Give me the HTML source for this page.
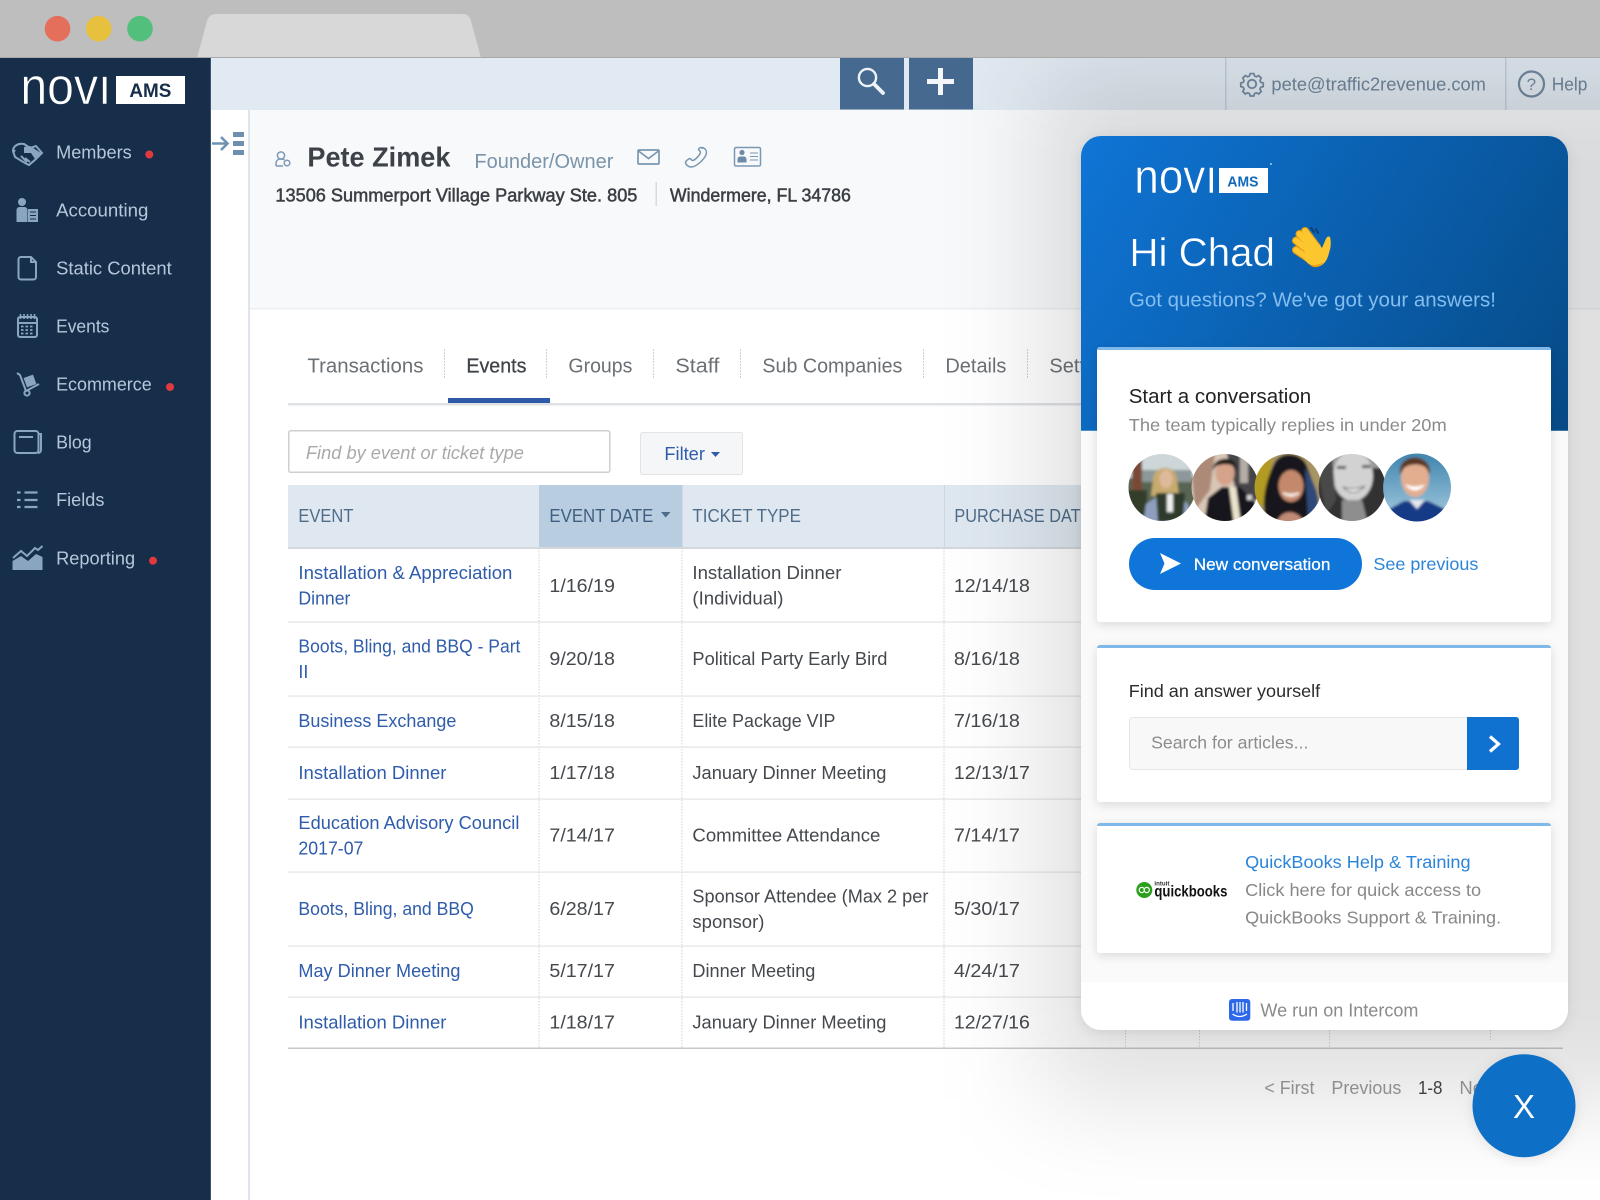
<!DOCTYPE html>
<html lang="en">
<head>
<meta charset="utf-8">
<title>Novi AMS</title>
<style>
html,body{margin:0;padding:0;background:#fff;width:1600px;height:1200px;overflow:hidden}
svg{display:block;filter:blur(.3px)}
text{font-family:"Liberation Sans",Arial,sans-serif;white-space:pre;transform:translateX(-.6px)}
.nav{font-size:18.5px;fill:#b5c7da;transform:translate(-.6px,-.6px)}
.tab{font-size:20px;fill:#6b7075;transform:translate(-.6px,-.6px)}
.th{font-size:18.5px;fill:#4f6c88;transform:translate(-.6px,-.6px)}
.a{font-size:18.5px;fill:#2f5cab}
.d{font-size:18.5px;fill:#45494e}
.w{fill:#8a8a8a}
.ni{fill:none;stroke:#8aa5c0;stroke-width:2}
.nf{fill:#8aa5c0}
</style>
</head>
<body>
<svg width="1600" height="1200" viewBox="0 0 1600 1200" xmlns="http://www.w3.org/2000/svg">
<defs>
<linearGradient id="hdr" gradientUnits="userSpaceOnUse" x1="1081" y1="136" x2="1568" y2="430">
<stop offset="0" stop-color="#0f75d6"/><stop offset="1" stop-color="#064a86"/>
</linearGradient>
<filter id="ovb" filterUnits="userSpaceOnUse" x="700" y="-300" width="1300" height="1800"><feGaussianBlur stdDeviation="50"/></filter>
<clipPath id="ovc"><rect x="211" y="58" width="1389" height="1142"/></clipPath>
<filter id="sh" x="-10%" y="-10%" width="120%" height="125%"><feDropShadow dx="0" dy="3" stdDeviation="5" flood-color="#000" flood-opacity=".13"/></filter>
<filter id="sh2" x="-10%" y="-10%" width="120%" height="120%"><feDropShadow dx="0" dy="2" stdDeviation="6" flood-color="#000" flood-opacity=".1"/></filter>
<filter id="b1" x="-20%" y="-20%" width="140%" height="140%"><feGaussianBlur stdDeviation="1.2"/></filter>
<clipPath id="c1"><circle cx="1162" cy="487.5" r="33.5"/></clipPath>
<clipPath id="c2"><circle cx="1225" cy="487.5" r="33.5"/></clipPath>
<clipPath id="c3"><circle cx="1288" cy="487.5" r="33.5"/></clipPath>
<clipPath id="c4"><circle cx="1352" cy="487.5" r="33.5"/></clipPath>
<clipPath id="c5"><circle cx="1417" cy="487.5" r="34"/></clipPath>
<linearGradient id="sky" x1="0" y1="0" x2="0" y2="1"><stop offset="0" stop-color="#3f83ad"/><stop offset="1" stop-color="#a9cfe2"/></linearGradient>
</defs>

<!-- page base -->
<rect width="1600" height="1200" fill="#fff"/>

<!-- browser chrome -->
<rect width="1600" height="58" fill="#bebebe"/>
<path d="M197 58L207 21Q209 14 216 14H463Q469 14 471 21L481 58Z" fill="#d8d8d8"/>
<rect y="57" width="1600" height="1" fill="#a9a9a9"/>
<circle cx="57.5" cy="28.7" r="12.8" fill="#e4705c"/>
<circle cx="98.7" cy="28.7" r="12.8" fill="#e7c03e"/>
<circle cx="140" cy="28.7" r="12.8" fill="#52c07c"/>

<!-- top bar -->
<rect x="211" y="58" width="1389" height="52" fill="#e1e9f2"/>
<rect x="840" y="58" width="64" height="51.5" fill="#45698f"/>
<rect x="909" y="58" width="64" height="51.5" fill="#45698f"/>
<circle cx="867.5" cy="77.5" r="8.6" fill="none" stroke="#eef3f8" stroke-width="2.4"/>
<path d="M874 84L883 93" stroke="#eef3f8" stroke-width="3.8" stroke-linecap="round"/>
<path d="M927 81.5H954M940.5 68V95" stroke="#f4f7fa" stroke-width="5"/>
<rect x="1225" y="58" width="1.5" height="52" fill="#c3cdd8"/>
<rect x="1505" y="58" width="1.5" height="52" fill="#c3cdd8"/>
<g fill="none" stroke="#73899f" stroke-width="1.8">
<circle cx="1252" cy="84" r="4.2"/>
<path d="M1249.5 71.500h5l1 3.400 2.600 1.100 3.200-1.700 3.500 3.500-1.700 3.200 1.100 2.600 3.400 1v5l-3.400 1-1.100 2.600 1.700 3.200-3.500 3.500-3.200-1.700-2.600 1.100-1 3.400h-5l-1-3.400-2.600-1.100-3.200 1.700-3.500-3.500 1.700-3.200-1.100-2.600-3.400-1v-5l3.400-1 1.100-2.600-1.700-3.200 3.500-3.500 3.200 1.700 2.600-1.100z" transform="translate(1252 84) scale(.72) translate(-1252 -86)" stroke-width="2.400"/>
<circle cx="1531.5" cy="84" r="12.5" stroke-width="2.2"/>
</g>
<text x="1532" y="90" font-size="17" text-anchor="middle" fill="#73899f">?</text>
<text x="1272" y="90.7" font-size="18.5" fill="#70869c" textLength="214.5" lengthAdjust="spacingAndGlyphs">pete@traffic2revenue.com</text>
<text x="1552.4" y="90.7" font-size="18.5" fill="#70869c" textLength="35.6" lengthAdjust="spacingAndGlyphs">Help</text>

<!-- collapse column -->
<rect x="211" y="110" width="38" height="1090" fill="#fff"/>
<rect x="248" y="110" width="2" height="1090" fill="#dfe5ec"/>
<path d="M212 143.500H227M221 137L227.500 143.500L221 150" fill="none" stroke="#6f93b5" stroke-width="2.600"/>
<path d="M233 134.500H244M233 143.500H244M233 152.500H244" stroke="#6f8fb0" stroke-width="5"/>

<!-- profile header -->
<rect x="250" y="110" width="1350" height="199" fill="#f7f9fb"/>
<rect x="250" y="308" width="1350" height="1.500" fill="#eceff2"/>
<g fill="none" stroke="#7d99b5" stroke-width="1.500">
<circle cx="281" cy="155.500" r="3.600"/>
<path d="M276 166v-3.500a4.500 4.500 0 0 1 4.500-3.500h1.500a4 4 0 0 1 2.500 1"/>
<path d="M276 166h7"/>
<circle cx="287" cy="163" r="2.800"/>
</g>
<text x="308" y="166.700" font-size="28" font-weight="700" fill="#3d4248" textLength="143" lengthAdjust="spacingAndGlyphs">Pete Zimek</text>
<text x="475" y="168" font-size="20" fill="#7b94a9" textLength="139" lengthAdjust="spacingAndGlyphs">Founder/Owner</text>
<g fill="none" stroke="#7b97b1" stroke-width="1.700">
<rect x="638" y="150" width="21" height="14" rx="1"/>
<path d="M638.500 151L648.500 158.500L658.500 151"/>
<path d="M702 147.500c2 0 4.500 2.500 4.500 4.500 0 6-10 15-15.500 15-2.500 0-5.500-2.500-5.500-4.500 0-1.500 3.500-4 4.500-4s1.500 2 2.500 2c2.500 0 8-6 8-8.500 0-1-2-1.500-2-2.500 0-1 1.500-2.500 3.500-1.500z" stroke-width="1.500"/>
<rect x="734.500" y="147.500" width="26" height="18.500" rx="1.500" stroke-width="1.500"/>
<path d="M750 153H758M750 156.500H758M750 160H758" stroke-width="1.100"/>
</g>
<circle cx="742" cy="152.500" r="2.600" fill="#6d8ba8"/>
<path d="M737.500 162.500v-3.500a3 3 0 0 1 3-2.500h3a3 3 0 0 1 3 2.500v3.500z" fill="#6d8ba8"/>
<text x="276" y="201.700" font-size="18.500" fill="#3b3f44" stroke="#3b3f44" stroke-width=".5" textLength="362" lengthAdjust="spacingAndGlyphs">13506 Summerport Village Parkway Ste. 805</text>
<rect x="655.500" y="182" width="1.500" height="24" fill="#d5dbe1"/>
<text x="670.500" y="201.700" font-size="18.500" fill="#3b3f44" stroke="#3b3f44" stroke-width=".5" textLength="181" lengthAdjust="spacingAndGlyphs">Windermere, FL 34786</text>

<!-- tabs -->
<text class="tab" x="308" y="373" textLength="116" lengthAdjust="spacingAndGlyphs">Transactions</text>
<text class="tab" x="467" y="373" style="fill:#3f4449" stroke="#3f4449" stroke-width=".3" textLength="60" lengthAdjust="spacingAndGlyphs">Events</text>
<text class="tab" x="569" y="373" textLength="64" lengthAdjust="spacingAndGlyphs">Groups</text>
<text class="tab" x="676" y="373" textLength="44" lengthAdjust="spacingAndGlyphs">Staff</text>
<text class="tab" x="763" y="373" textLength="140" lengthAdjust="spacingAndGlyphs">Sub Companies</text>
<text class="tab" x="946" y="373" textLength="61" lengthAdjust="spacingAndGlyphs">Details</text>
<text class="tab" x="1050" y="373">Settings</text>
<g stroke="#cfd2d5" stroke-width="1" stroke-dasharray="2 1">
<path d="M444.500 349V379M546.500 349V379M653.500 349V379M740.500 349V379M923.500 349V379M1027.500 349V379"/>
</g>
<rect x="288" y="403" width="1275" height="2.500" fill="#dfe2e5"/>
<rect x="448" y="398" width="102" height="5" fill="#2e58a8"/>

<!-- search + filter -->
<rect x="288.750" y="430.750" width="321" height="41.500" rx="2" fill="#fff" stroke="#cfcfcf" stroke-width="1.500"/>
<text x="306.500" y="459" font-size="18.500" font-style="italic" fill="#a9a9a9" textLength="218" lengthAdjust="spacingAndGlyphs">Find by event or ticket type</text>
<rect x="640.500" y="432.500" width="102" height="42" rx="2" fill="#f5f6f7" stroke="#e2e4e6"/>
<text x="665" y="460" font-size="18.500" fill="#2f5cab" textLength="40.500" lengthAdjust="spacingAndGlyphs">Filter</text>
<path d="M711 452H720L715.500 457Z" fill="#2f5cab"/>

<!-- table header -->
<rect x="288" y="485" width="1275" height="63" fill="#dfe8f1"/>
<rect x="539" y="485" width="143.500" height="63" fill="#b9cde0"/>
<rect x="944" y="485" width="1" height="63" fill="#cdd7e1"/>
<rect x="288" y="547" width="1275" height="2" fill="#d4d8dc"/>
<text class="th" x="299" y="522.700" textLength="55" lengthAdjust="spacingAndGlyphs">EVENT</text>
<text class="th" x="550" y="522.700" style="fill:#3e5f80" textLength="104" lengthAdjust="spacingAndGlyphs">EVENT DATE</text>
<path d="M661 512H670.500L665.700 517.500Z" fill="#4f6c88"/>
<text class="th" x="693" y="522.700" textLength="108.500" lengthAdjust="spacingAndGlyphs">TICKET TYPE</text>
<text class="th" x="955" y="522.700" textLength="137" lengthAdjust="spacingAndGlyphs">PURCHASE DATE</text>

<!-- table grid -->
<g stroke="#d2d4d6" stroke-width="1" stroke-dasharray="1.500 1.500">
<path d="M539 548V1048M682 548V1048M944 548V1048M1125.500 1030V1048M1199.500 1030V1048M1329.500 1030V1048M1490.500 1030V1040"/>
</g>
<g fill="#e2e4e6">
<rect x="288" y="621.500" width="1275" height="1.200"/>
<rect x="288" y="695.500" width="1275" height="1.200"/>
<rect x="288" y="746.500" width="1275" height="1.200"/>
<rect x="288" y="798.500" width="1275" height="1.200"/>
<rect x="288" y="871.500" width="1275" height="1.200"/>
<rect x="288" y="945.500" width="1275" height="1.200"/>
<rect x="288" y="996.500" width="1275" height="1.200"/>
</g>
<rect x="288" y="1047.500" width="1275" height="1.500" fill="#c6c9cc"/>

<!-- rows -->
<text class="a" x="299" y="579" textLength="214" lengthAdjust="spacingAndGlyphs">Installation &amp; Appreciation</text>
<text class="a" x="299" y="604.500" textLength="52" lengthAdjust="spacingAndGlyphs">Dinner</text>
<text class="d" x="550" y="592" textLength="65.500" lengthAdjust="spacingAndGlyphs">1/16/19</text>
<text class="d" x="693" y="579" textLength="149" lengthAdjust="spacingAndGlyphs">Installation Dinner</text>
<text class="d" x="693" y="604.500" textLength="91" lengthAdjust="spacingAndGlyphs">(Individual)</text>
<text class="d" x="954.500" y="592" textLength="76" lengthAdjust="spacingAndGlyphs">12/14/18</text>

<text class="a" x="299" y="652.500" textLength="222" lengthAdjust="spacingAndGlyphs">Boots, Bling, and BBQ - Part</text>
<text class="a" x="299" y="678" textLength="10" lengthAdjust="spacingAndGlyphs">II</text>
<text class="d" x="550" y="665" textLength="65.500" lengthAdjust="spacingAndGlyphs">9/20/18</text>
<text class="d" x="693" y="665" textLength="195" lengthAdjust="spacingAndGlyphs">Political Party Early Bird</text>
<text class="d" x="954.500" y="665" textLength="66" lengthAdjust="spacingAndGlyphs">8/16/18</text>

<text class="a" x="299" y="727" textLength="158" lengthAdjust="spacingAndGlyphs">Business Exchange</text>
<text class="d" x="550" y="727" textLength="65.500" lengthAdjust="spacingAndGlyphs">8/15/18</text>
<text class="d" x="693" y="727" textLength="143" lengthAdjust="spacingAndGlyphs">Elite Package VIP</text>
<text class="d" x="954.500" y="727" textLength="66" lengthAdjust="spacingAndGlyphs">7/16/18</text>

<text class="a" x="299" y="779" textLength="148" lengthAdjust="spacingAndGlyphs">Installation Dinner</text>
<text class="d" x="550" y="779" textLength="65.500" lengthAdjust="spacingAndGlyphs">1/17/18</text>
<text class="d" x="693" y="779" textLength="194" lengthAdjust="spacingAndGlyphs">January Dinner Meeting</text>
<text class="d" x="954.500" y="779" textLength="76" lengthAdjust="spacingAndGlyphs">12/13/17</text>

<text class="a" x="299" y="829" textLength="221" lengthAdjust="spacingAndGlyphs">Education Advisory Council</text>
<text class="a" x="299" y="854.500" textLength="65" lengthAdjust="spacingAndGlyphs">2017-07</text>
<text class="d" x="550" y="841.500" textLength="65.500" lengthAdjust="spacingAndGlyphs">7/14/17</text>
<text class="d" x="693" y="841.500" textLength="188" lengthAdjust="spacingAndGlyphs">Committee Attendance</text>
<text class="d" x="954.500" y="841.500" textLength="66" lengthAdjust="spacingAndGlyphs">7/14/17</text>

<text class="a" x="299" y="915" textLength="175.500" lengthAdjust="spacingAndGlyphs">Boots, Bling, and BBQ</text>
<text class="d" x="550" y="915" textLength="65.500" lengthAdjust="spacingAndGlyphs">6/28/17</text>
<text class="d" x="693" y="902.500" textLength="236" lengthAdjust="spacingAndGlyphs">Sponsor Attendee (Max 2 per</text>
<text class="d" x="693" y="928" textLength="72" lengthAdjust="spacingAndGlyphs">sponsor)</text>
<text class="d" x="954.500" y="915" textLength="66" lengthAdjust="spacingAndGlyphs">5/30/17</text>

<text class="a" x="299" y="977" textLength="162" lengthAdjust="spacingAndGlyphs">May Dinner Meeting</text>
<text class="d" x="550" y="977" textLength="65.500" lengthAdjust="spacingAndGlyphs">5/17/17</text>
<text class="d" x="693" y="977" textLength="123" lengthAdjust="spacingAndGlyphs">Dinner Meeting</text>
<text class="d" x="954.500" y="977" textLength="66" lengthAdjust="spacingAndGlyphs">4/24/17</text>

<text class="a" x="299" y="1028.500" textLength="148" lengthAdjust="spacingAndGlyphs">Installation Dinner</text>
<text class="d" x="550" y="1028.500" textLength="65.500" lengthAdjust="spacingAndGlyphs">1/18/17</text>
<text class="d" x="693" y="1028.500" textLength="194" lengthAdjust="spacingAndGlyphs">January Dinner Meeting</text>
<text class="d" x="954.500" y="1028.500" textLength="76" lengthAdjust="spacingAndGlyphs">12/27/16</text>

<!-- pagination -->
<text x="1265" y="1094" font-size="18.500" fill="#9a9a9a" textLength="50" lengthAdjust="spacingAndGlyphs">&lt; First</text>
<text x="1332" y="1094" font-size="18.500" fill="#9a9a9a" textLength="70" lengthAdjust="spacingAndGlyphs">Previous</text>
<text x="1418.600" y="1094" font-size="18.500" fill="#444" textLength="24.500" lengthAdjust="spacingAndGlyphs">1-8</text>
<text x="1460" y="1094" font-size="18.500" fill="#9a9a9a">Next</text>

<!-- sidebar -->
<rect x="0" y="58" width="211" height="1142" fill="#172e4a"/>
<rect x="210" y="58" width="1" height="1142" fill="#3a5472"/>
<text x="21" y="104" font-size="52" fill="#fff" stroke="#172e4a" stroke-width=".6" textLength="91" lengthAdjust="spacingAndGlyphs">novı</text>
<rect x="116" y="76" width="69" height="28" fill="#fff"/>
<text x="130" y="97" font-size="19" font-weight="700" fill="#172e4a" textLength="42" lengthAdjust="spacingAndGlyphs">AMS</text>

<text class="nav" x="56.700" y="159.300" textLength="75.600" lengthAdjust="spacingAndGlyphs">Members</text>
<text class="nav" x="56.700" y="217.300" textLength="92.300" lengthAdjust="spacingAndGlyphs">Accounting</text>
<text class="nav" x="56.700" y="275" textLength="115.600" lengthAdjust="spacingAndGlyphs">Static Content</text>
<text class="nav" x="56.700" y="333.300" textLength="53.300" lengthAdjust="spacingAndGlyphs">Events</text>
<text class="nav" x="56.700" y="391" textLength="95.600" lengthAdjust="spacingAndGlyphs">Ecommerce</text>
<text class="nav" x="56.700" y="449" textLength="35.600" lengthAdjust="spacingAndGlyphs">Blog</text>
<text class="nav" x="56.700" y="506.700" textLength="48.300" lengthAdjust="spacingAndGlyphs">Fields</text>
<text class="nav" x="56.700" y="565" textLength="79" lengthAdjust="spacingAndGlyphs">Reporting</text>
<circle cx="149.300" cy="154.500" r="4" fill="#e0393f"/>
<circle cx="170" cy="387" r="4" fill="#e0393f"/>
<circle cx="153" cy="560.700" r="4" fill="#e0393f"/>

<!-- nav icons -->
<path class="ni" d="M13 151C13 146 18 143 24 144L30 148L36 146L42 153L36 159L29 165L25 163L20 160L15 157Z"/>
<path class="nf" d="M24 147L30 146L41 153L35 159L31 153L24 153Z"/>
<path class="ni" d="M25 158L30 162M21 156L27 162M15 150L13 153" stroke-width="1.500"/>
<circle class="nf" cx="22" cy="202" r="4"/>
<path class="nf" d="M16.500 222V210a3 3 0 0 1 3-3h5a3 3 0 0 1 3 3v12z"/>
<rect class="nf" x="28" y="209" width="10" height="13"/>
<path d="M30 212H36M30 215.500H36M30 219H36" stroke="#172e4a" stroke-width="1"/>
<path class="ni" d="M23 257H31L36 262V277a2.500 2.500 0 0 1-2.500 2.500H21a2.500 2.500 0 0 1-2.500-2.500V259.500A2.500 2.500 0 0 1 21 257Z"/>
<path class="ni" d="M31 257V262H36"/>
<rect class="ni" x="18" y="317" width="19" height="20" rx="2"/>
<path class="ni" d="M18 323H37" />
<path d="M20.500 314V319M24 314V319M27.500 314V319M31 314V319M34.500 314V319" stroke="#8aa5c0" stroke-width="1.600"/>
<path d="M21 326.500H34M21 330H34M21 333.500H34" stroke="#8aa5c0" stroke-width="1.800" stroke-dasharray="2.500 2"/>
<path class="ni" d="M17 373L20 375L26 391L39 384" />
<circle class="ni" cx="27" cy="393" r="2.600"/>
<rect class="nf" x="25" y="376" width="10" height="10" transform="rotate(-20 30 381)"/>
<rect class="ni" x="14.500" y="431" width="24" height="22" rx="3"/>
<path class="ni" d="M38.500 434H41V450a3 3 0 0 1-3 3M19 437H33"/>
<path d="M17 492.500H20.500M17 500H20.500M17 507H20.500M24.500 492.500H37.500M24.500 500H37.500M24.500 507H37.500" stroke="#8aa5c0" stroke-width="2.200"/>
<path class="nf" d="M12.500 570V561L21 556L28 561L36 554L42.500 557V570Z"/>
<path class="ni" d="M13 558L21 551L27 556L35 548L38 550L42.500 546"/>

<!-- overlay gradient -->
<g clip-path="url(#ovc)"><rect x="1040" y="60" width="800" height="1040" fill="#000" fill-opacity=".12" filter="url(#ovb)"/></g>

<!-- widget -->
<rect x="1081" y="136" width="487" height="894" rx="20" fill="#fafafa" filter="url(#sh2)"/>
<path d="M1081 430.700V156a20 20 0 0 1 20-20H1548a20 20 0 0 1 20 20V430.700Z" fill="url(#hdr)"/>
<path d="M1081 982H1568V1010a20 20 0 0 1-20 20H1101a20 20 0 0 1-20-20Z" fill="#fff"/>

<!-- widget header -->
<text x="1135" y="193" font-size="48" fill="#fff" stroke="#0d68bd" stroke-width=".5" textLength="83" lengthAdjust="spacingAndGlyphs">novı</text>
<rect x="1219" y="168" width="49" height="25" fill="#fff"/>
<text x="1228" y="186.500" font-size="15" font-weight="700" fill="#1068b9" textLength="31" lengthAdjust="spacingAndGlyphs">AMS</text>
<circle cx="1271" cy="164" r="1" fill="#9ecbf2"/>
<text x="1130" y="266" font-size="40" fill="#fff" stroke="#0c68bf" stroke-width=".4" textLength="145.500" lengthAdjust="spacingAndGlyphs">Hi Chad</text>
<!-- waving hand -->
<g fill="none" stroke-linecap="round">
<path d="M1311 228L1314 232M1316 229L1318 233" stroke="#0c4076" stroke-width="2"/>
<path d="M1305 231L1317 247M1299.500 234L1313 249M1296 240.500L1310 252M1296 250L1308 258" stroke="#e59a16" stroke-width="8"/>
<path d="M1305 231L1317 247M1299.500 234L1313 249M1296 240.500L1310 252M1296 250L1308 258" stroke="#fcc62f" stroke-width="5.800"/>
</g>
<path d="M1306 250L1318 243L1322 248L1325 241Q1327 235 1330 237Q1332 245 1329 253Q1326 266 1316 267Q1308 266 1302 256Z" fill="#fcc62f"/>
<path d="M1306 262Q1314 268 1324 262Q1318 269 1312 266.500Z" fill="#ee9a12"/>
<text x="1129.500" y="306.700" font-size="20" fill="#84bdef" textLength="367" lengthAdjust="spacingAndGlyphs">Got questions? We've got your answers!</text>

<!-- card 1 -->
<rect x="1097" y="347" width="454" height="275" rx="3" fill="#fff" filter="url(#sh)"/>
<path d="M1097 350a3 3 0 0 1 3-3H1548a3 3 0 0 1 3 3Z" fill="#7fb9ea"/>
<text x="1129.300" y="403" font-size="20" fill="#222" textLength="182.500" lengthAdjust="spacingAndGlyphs">Start a conversation</text>
<text x="1129.300" y="431" font-size="17.500" fill="#8b8b8b" textLength="318" lengthAdjust="spacingAndGlyphs">The team typically replies in under 20m</text>

<!-- avatars -->
<g clip-path="url(#c1)"><g filter="url(#b1)">
<rect x="1125" y="450" width="75" height="75" fill="#cdd6d8"/>
<rect x="1125" y="478" width="75" height="47" fill="#596552"/>
<rect x="1132" y="456" width="10" height="34" fill="#7a4a36"/>
<rect x="1142" y="470" width="50" height="12" fill="#8d989a"/>
<rect x="1125" y="490" width="22" height="32" fill="#303d2b"/>
<path d="M1143 524L1146 504L1158 496L1178 496L1188 504L1193 524Z" fill="#8e9fbe"/>
<path d="M1153 480C1153 464 1177 464 1177 480L1179 496L1151 496Z" fill="#c7ab6e"/>
<ellipse cx="1166" cy="479" rx="6.500" ry="9" fill="#dfb99c"/>
<path d="M1156 493H1185L1183 522H1158Z" fill="#2d3a2a"/>
<rect x="1167" y="494" width="6" height="18" fill="#eef0ee"/>
</g></g>
<g clip-path="url(#c2)"><g filter="url(#b1)">
<rect x="1190" y="450" width="75" height="75" fill="#d9c6b6"/>
<path d="M1190 454H1215L1210 490L1195 510Z" fill="#ad8a78"/>
<path d="M1226 450H1262V500H1238Z" fill="#45444a"/>
<rect x="1240" y="455" width="8" height="28" fill="#b5aea6"/>
<path d="M1204 524L1208 498L1222 487L1240 487L1256 503L1260 524Z" fill="#17181e"/>
<path d="M1229 487L1236 487L1241 524H1234Z" fill="#e9e2cc"/>
<ellipse cx="1225" cy="473" rx="9.500" ry="12.500" fill="#d5a38a"/>
<path d="M1213 470C1212 456 1238 454 1237 470C1232 462 1222 464 1216 466Z" fill="#1f1a18"/>
<rect x="1247" y="495" width="5" height="5" fill="#d5d5d8"/>
</g></g>
<g clip-path="url(#c3)"><g filter="url(#b1)">
<rect x="1252" y="450" width="75" height="75" fill="#a79465"/>
<path d="M1252 450H1274L1264 505H1252Z" fill="#b39a22"/>
<path d="M1266 520C1260 500 1268 476 1274 464C1280 450 1302 452 1307 466C1312 482 1322 498 1316 516L1300 524H1274Z" fill="#14151c"/>
<path d="M1305 468C1314 482 1322 498 1317 516L1308 520Z" fill="#2f4a78"/>
<ellipse cx="1291" cy="486" rx="12.500" ry="16" fill="#c4896c"/>
<path d="M1283 493Q1291 499 1299 493Q1291 496 1283 493Z" fill="#f2e6de" stroke="#f2e6de" stroke-width="2"/>
<path d="M1277 522C1281 509 1298 509 1304 522Z" fill="#c08b74"/>
</g></g>
<g clip-path="url(#c4)"><g filter="url(#b1)">
<rect x="1318" y="450" width="75" height="75" fill="#333"/>
<rect x="1330" y="450" width="50" height="18" fill="#9c9c9c"/>
<ellipse cx="1353" cy="476" rx="20" ry="25" fill="#d2d2d2"/>
<path d="M1342 500L1362 500L1368 524H1342Z" fill="#8e8e8e"/>
<path d="M1343 487Q1353 498 1365 486Q1353 491 1343 487Z" fill="#f8f8f8" stroke="#666" stroke-width="1"/>
<rect x="1337" y="466" width="9" height="3" fill="#5a5a5a"/>
<rect x="1362" y="465" width="9" height="3" fill="#5a5a5a"/>
<path d="M1318 470L1332 455L1336 500L1326 515Z" fill="#4a4a4a"/>
</g></g>
<g clip-path="url(#c5)"><g filter="url(#b1)">
<rect x="1382" y="452" width="72" height="72" fill="url(#sky)"/>
<path d="M1386 511L1404 501H1428L1449 511V524H1386Z" fill="#173b86"/>
<path d="M1409 500L1417 509L1425 500Z" fill="#e4e8ee"/>
<ellipse cx="1415" cy="478" rx="14" ry="19" fill="#e3ae90"/>
<path d="M1400 474C1397 452 1432 452 1430 474L1428 472C1427 462 1404 462 1402 472Z" fill="#5a3722"/>
<path d="M1406 485Q1415 495 1424 485Q1415 489 1406 485Z" fill="#fff" stroke="#fff"/>
</g></g>

<!-- button -->
<rect x="1129" y="538" width="233" height="52" rx="26" fill="#0f75d9"/>
<path d="M1160 553L1181 563.500L1160 574L1164.500 563.500Z" fill="#fff"/>
<text x="1194.300" y="570" font-size="16.500" fill="#fff" stroke="#fff" stroke-width=".25" textLength="136.700" lengthAdjust="spacingAndGlyphs">New conversation</text>
<text x="1374" y="570" font-size="17.500" fill="#2b84d8" textLength="105" lengthAdjust="spacingAndGlyphs">See previous</text>

<!-- card 2 -->
<rect x="1097" y="645" width="454" height="157" rx="3" fill="#fff" filter="url(#sh)"/>
<path d="M1097 648a3 3 0 0 1 3-3H1548a3 3 0 0 1 3 3Z" fill="#7fb9ea"/>
<text x="1129.300" y="697" font-size="17.500" fill="#2b2b2b" textLength="191.500" lengthAdjust="spacingAndGlyphs">Find an answer yourself</text>
<rect x="1129.500" y="717.500" width="340" height="52" rx="3" fill="#f8f8f8" stroke="#e6e6e6"/>
<path d="M1467 717H1516a3 3 0 0 1 3 3V767a3 3 0 0 1-3 3H1467Z" fill="#0f72d0"/>
<path d="M1490 736.500L1498.500 744L1490 751.500" fill="none" stroke="#fff" stroke-width="3.200"/>
<text x="1151.700" y="748.700" font-size="17.500" fill="#8c8c8c" textLength="157.300" lengthAdjust="spacingAndGlyphs">Search for articles...</text>

<!-- card 3 -->
<rect x="1097" y="823" width="454" height="130" rx="3" fill="#fff" filter="url(#sh)"/>
<path d="M1097 826a3 3 0 0 1 3-3H1548a3 3 0 0 1 3 3Z" fill="#7fb9ea"/>
<circle cx="1144.300" cy="890" r="8" fill="#2ca01c"/>
<circle cx="1141.800" cy="890" r="2.600" fill="none" stroke="#fff" stroke-width="1.200"/>
<circle cx="1146.800" cy="890" r="2.600" fill="none" stroke="#fff" stroke-width="1.200"/>
<text x="1155" y="885.500" font-size="6" font-weight="700" fill="#333" textLength="15" lengthAdjust="spacingAndGlyphs">intuit</text>
<text x="1155" y="896.700" font-size="15.500" font-weight="700" fill="#111" textLength="73" lengthAdjust="spacingAndGlyphs">quickbooks</text>
<text x="1245.700" y="868" font-size="17.500" fill="#2b84d8" textLength="225.500" lengthAdjust="spacingAndGlyphs">QuickBooks Help &amp; Training</text>
<text x="1245.700" y="896" font-size="17.500" fill="#888" textLength="236" lengthAdjust="spacingAndGlyphs">Click here for quick access to</text>
<text x="1245.700" y="923.700" font-size="17.500" fill="#888" textLength="256" lengthAdjust="spacingAndGlyphs">QuickBooks Support &amp; Training.</text>

<!-- footer -->
<rect x="1229" y="999" width="21.300" height="21.700" rx="3" fill="#2c68e8"/>
<path d="M1233 1003V1011M1237 1002V1012.500M1240 1002V1012.500M1243 1002V1012.500M1246.500 1003V1011" stroke="#fff" stroke-width="1.300"/>
<path d="M1232.500 1014Q1239.500 1019 1247 1014" fill="none" stroke="#fff" stroke-width="1.300"/>
<text class="w" x="1261" y="1016.700" font-size="18" textLength="158" lengthAdjust="spacingAndGlyphs">We run on Intercom</text>

<!-- launcher -->
<circle cx="1524" cy="1105.700" r="51.500" fill="#0f6fc6" filter="url(#sh2)"/>
<text x="1524.600" y="1118" font-size="33" fill="#fff" text-anchor="middle">X</text>
</svg>
</body>
</html>
